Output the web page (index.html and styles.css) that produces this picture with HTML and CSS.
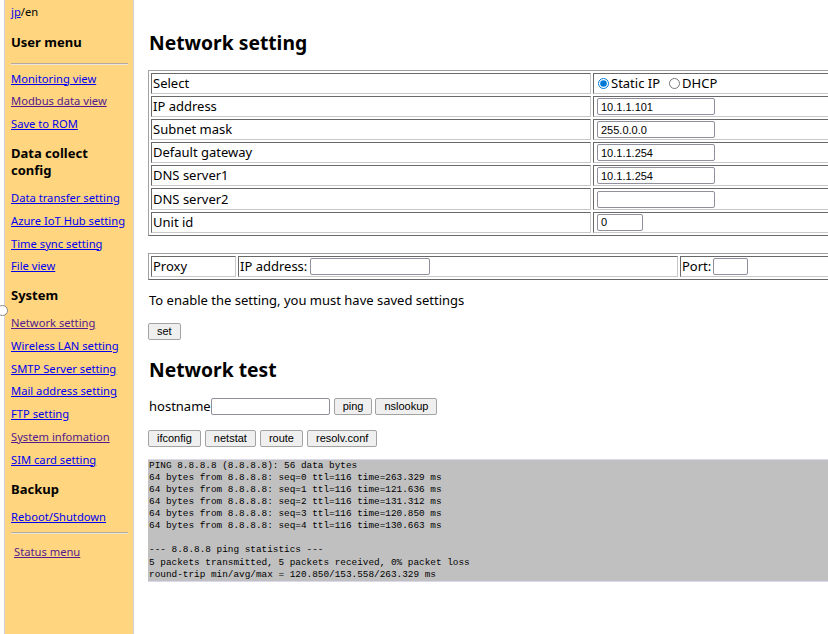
FILE: index.html
```html
<!DOCTYPE html>
<html>
<head>
<meta charset="utf-8">
<title>Network setting</title>
<link rel="stylesheet" href="styles.css">
</head>
<body>
<div class="page">
  <nav class="side">
    <div class="lang"><a href="#" class="lnk">jp</a>/en</div>
    <h3 class="side-head first">User menu</h3>
    <hr class="side-rule top-rule">
    <a href="#" class="nav-link">Monitoring view</a>
    <a href="#" class="nav-link visited">Modbus data view</a>
    <a href="#" class="nav-link">Save to ROM</a>
    <h3 class="side-head">Data collect config</h3>
    <a href="#" class="nav-link">Data transfer setting</a>
    <a href="#" class="nav-link">Azure IoT Hub setting</a>
    <a href="#" class="nav-link">Time sync setting</a>
    <a href="#" class="nav-link">File view</a>
    <h3 class="side-head">System</h3>
    <a href="#" class="nav-link visited">Network setting</a>
    <a href="#" class="nav-link">Wireless LAN setting</a>
    <a href="#" class="nav-link">SMTP Server setting</a>
    <a href="#" class="nav-link">Mail address setting</a>
    <a href="#" class="nav-link">FTP setting</a>
    <a href="#" class="nav-link visited">System infomation</a>
    <a href="#" class="nav-link">SIM card setting</a>
    <h3 class="side-head">Backup</h3>
    <a href="#" class="nav-link">Reboot/Shutdown</a>
    <hr class="side-rule bottom-rule">
    <a href="#" class="nav-link visited status">Status menu</a>
  </nav>
  <span class="handle"></span>
  <main class="content">
    <h2 class="title">Network setting</h2>
    <table class="grid settings">
      <tr><td class="label">Select</td><td class="value"><label class="radio"><input type="radio" name="mode" checked>Static IP</label><label class="radio"><input type="radio" name="mode">DHCP</label></td></tr>
      <tr><td class="label">IP address</td><td class="value"><input class="field" type="text" value="10.1.1.101"></td></tr>
      <tr><td class="label">Subnet mask</td><td class="value"><input class="field" type="text" value="255.0.0.0"></td></tr>
      <tr><td class="label">Default gateway</td><td class="value"><input class="field" type="text" value="10.1.1.254"></td></tr>
      <tr><td class="label">DNS server1</td><td class="value"><input class="field" type="text" value="10.1.1.254"></td></tr>
      <tr><td class="label">DNS server2</td><td class="value"><input class="field" type="text" value=""></td></tr>
      <tr><td class="label">Unit id</td><td class="value"><input class="field short" type="text" value="0"></td></tr>
    </table>
    <table class="grid proxy">
      <tr><td class="p-name">Proxy</td><td class="p-ip">IP address:<input class="field pfield" type="text"></td><td class="p-port">Port:<input class="field port" type="text"></td></tr>
    </table>
    <p class="note">To enable the setting, you must have saved settings</p>
    <div class="btn-row set-row"><button class="btn">set</button></div>
    <h2 class="title test">Network test</h2>
    <div class="host-row"><span>hostname</span><input class="field host" type="text"><button class="btn">ping</button><button class="btn">nslookup</button></div>
    <div class="btn-row cmds"><button class="btn">ifconfig</button><button class="btn">netstat</button><button class="btn">route</button><button class="btn">resolv.conf</button></div>
<pre class="out">PING 8.8.8.8 (8.8.8.8): 56 data bytes
64 bytes from 8.8.8.8: seq=0 ttl=116 time=263.329 ms
64 bytes from 8.8.8.8: seq=1 ttl=116 time=121.636 ms
64 bytes from 8.8.8.8: seq=2 ttl=116 time=131.312 ms
64 bytes from 8.8.8.8: seq=3 ttl=116 time=120.850 ms
64 bytes from 8.8.8.8: seq=4 ttl=116 time=130.663 ms

--- 8.8.8.8 ping statistics ---
5 packets transmitted, 5 packets received, 0% packet loss
round-trip min/avg/max = 120.850/153.558/263.329 ms</pre>
  </main>
</div>
</body>
</html>
```
FILE: styles.css
```css
html, body {
  margin: 0;
  padding: 0;
  overflow: hidden;
  background: #fff;
}
body {
  font-family: "Noto Sans", "Open Sans", sans-serif;
  color: #000;
}
.page {
  display: flex;
  align-items: stretch;
  min-height: 634px;
  position: relative;
}
.side {
  margin-left: 4px;
  width: 117px;
  min-height: 634px;
  flex: none;
  background: #ffd57f;
  border-left: 1px solid #d2d2d8;
  border-right: 1px solid #d2d2d8;
  padding: 0 5px 0 6px;
  display: flex;
  flex-direction: column;
  align-items: flex-start;
}
.lang {
  font-size: 11.2px;
  line-height: 16px;
  margin-top: 4px;
}
.lnk { color: #0000ee; }
.side-head {
  font-size: 13px;
  line-height: 17px;
  font-weight: bold;
  margin: 9.5px 0 8px;
}
.side-head.first { margin-top: 13.5px; margin-bottom: 0; }
.side-rule {
  align-self: stretch;
  height: 0;
  border: none;
  border-top: 1px solid #b4aa98;
  border-bottom: 1px solid #ece6da;
}
.top-rule { margin: 12.5px 0 2.6px; }
.bottom-rule { margin: 3.6px 0 2px; }
.nav-link {
  display: block;
  font-size: 11.2px;
  line-height: 22.7px;
  height: 22.7px;
  color: #0000ee;
  text-decoration: underline;
  white-space: nowrap;
}
.nav-link.visited { color: #551a8b; }
.nav-link.status { margin-left: 3px; margin-top: 5px; }
.handle {
  position: absolute;
  left: -3px;
  top: 305px;
  width: 9px;
  height: 9px;
  border: 1px solid #888;
  border-radius: 50%;
  background: #fff;
}
.content {
  flex: 1;
  padding-left: 14px;
  min-width: 0;
}
.title {
  font-size: 19.3px;
  line-height: 24px;
  font-weight: bold;
  margin: 31px 0 15px 1px;
}
.grid {
  border: 1px solid;
  border-color: #a0a0a0 #696969 #696969 #a0a0a0;
  border-spacing: 2px;
  table-layout: fixed;
  font-size: 13px;
}
.grid td {
  border: 1px solid;
  border-color: #696969 #c8c8c8 #c8c8c8 #696969;
  padding: 0 1px;
  height: 19.1px;
  line-height: 19px;
  white-space: nowrap;
  vertical-align: middle;
}
.settings { width: 700px; }
.settings td.label { width: 436px; }
.radio {
  display: inline-flex;
  align-items: center;
  vertical-align: top;
  height: 19px;
}
.radio input {
  width: 11px;
  height: 11px;
  margin: 0 2px 0 3px;
  accent-color: #0078d7;
}
.radio + .radio input { margin-left: 9px; }
.field {
  font-family: "Liberation Sans", Arial, sans-serif;
  font-size: 11px;
  height: 17px;
  box-sizing: border-box;
  width: 118px;
  border: 1px solid #8f8f9d;
  border-radius: 2px;
  padding: 0 3px;
  margin: 1px 0 0 2px;
  vertical-align: top;
  background: #fff;
}
.field.short { width: 46px; }
.proxy { width: 700px; margin-top: 17px; }
.proxy td.p-name { width: 81px; }
.proxy td.p-ip { width: 436px; }
.pfield { width: 120px; margin-left: 3px; }
.port { width: 35px; margin-left: 2px; }
.note {
  font-size: 13px;
  line-height: 19px;
  margin: 11px 0 0 1px;
}
.btn-row {
  display: flex;
  gap: 4px;
}
.set-row { margin-top: 13px; }
.btn {
  font-family: "Liberation Sans", Arial, sans-serif;
  font-size: 11px;
  line-height: 13px;
  height: 17px;
  box-sizing: border-box;
  padding: 1px 8px;
  margin: 0;
  border: 1px solid #a3a3a3;
  border-radius: 2px;
  background: #efefef;
  color: #000;
}
.title.test { margin-top: 18px; margin-bottom: 0; }
.host-row {
  display: flex;
  align-items: center;
  margin-top: 15.5px;
  font-size: 13px;
  line-height: 19px;
  margin-left: 1px;
}
.host-row .host { width: 119px; margin: 0 4px 0 0; height: 17px; vertical-align: middle; }
.host-row .btn + .btn { margin-left: 3px; }
.cmds { margin-top: 13.5px; }
.out {
  margin: 12px 0 0;
  width: 720px;
  background: #c0c0c0;
  border-top: 1px solid #dcd8ec;
  border-bottom: 1px solid #dcd8ec;
  padding: 0 0 0 1px;
  font-family: "Liberation Mono", "DejaVu Sans Mono", monospace;
  font-size: 9.4px;
  line-height: 12.1px;
  color: #000;
}
```
